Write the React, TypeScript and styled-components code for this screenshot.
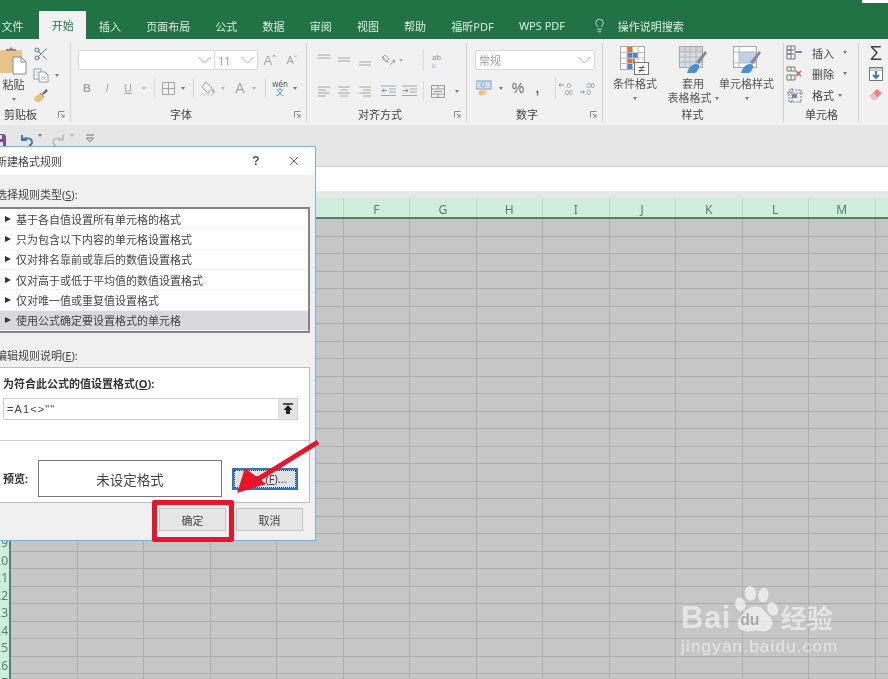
import * as React from 'react'
import styled, { createGlobalStyle } from 'styled-components'
import { Lightbulb, Scissors, X } from 'lucide-react'

const FONT = `"Noto Sans", "Noto Sans CJK SC", sans-serif`
const COL_WIDTH = 66.5
const ROW_HEIGHT = 17.5
const COLUMNS = ['A', 'B', 'C', 'D', 'E', 'F', 'G', 'H', 'I', 'J', 'K', 'L', 'M', 'N']
const ROWS = new Array(28).fill(0).map((_, index) => index + 1)
const TABS = ['文件', '开始', '插入', '页面布局', '公式', '数据', '审阅', '视图', '帮助', '福昕PDF', 'WPS PDF']
const RULE_TYPES = [
  '基于各自值设置所有单元格的格式',
  '只为包含以下内容的单元格设置格式',
  '仅对排名靠前或靠后的数值设置格式',
  '仅对高于或低于平均值的数值设置格式',
  '仅对唯一值或重复值设置格式',
  '使用公式确定要设置格式的单元格',
]

const GlobalStyle = createGlobalStyle`
  html, body {
    margin: 0;
    padding: 0;
    background: #fff;
  }
  body {
    font-family: ${FONT};
    font-size: 11px;
  }
`

const Page = styled.div`
  position: relative;
  width: 888px;
  height: 679px;
  overflow: hidden;
  display: flex;
  flex-direction: column;
  filter: blur(0.6px);
  background: #e6e6e6;
`

const TitleStrip = styled.div`
  height: 12px;
  flex: none;
  background: #217346;
  display: flex;
  justify-content: flex-end;
`

const WindowCorner = styled.div`
  width: 26px;
  height: 3px;
  background: #fff;
`

const TabRow = styled.div`
  height: 27px;
  flex: none;
  background: #217346;
  display: flex;
  align-items: stretch;
  margin-left: -11px;
`

const Tab = styled.div<{ $active?: boolean }>`
  padding: 0 12.6px;
  display: flex;
  align-items: center;
  font-size: 11px;
  white-space: nowrap;
  color: ${p => (p.$active ? '#217346' : '#dcebe2')};
  background: ${p => (p.$active ? '#f2f2f2' : 'transparent')};
  margin-top: ${p => (p.$active ? '-1px' : '0')};
  &:first-child {
    margin-right: 3px;
  }
`

const SearchHint = styled.div`
  display: flex;
  align-items: center;
  gap: 11px;
  margin-left: 14px;
  color: #dcebe2;
  font-size: 11px;
  svg {
    width: 15px;
    height: 15px;
  }
`

const Ribbon = styled.div`
  height: 86px;
  flex: none;
  background: #f1f1f1;
  display: flex;
  box-sizing: border-box;
  padding: 4px 0 3px;
`

const Group = styled.div<{ $w: number; $last?: boolean }>`
  width: ${p => p.$w}px;
  flex: none;
  box-sizing: border-box;
  display: flex;
  flex-direction: column;
  border-right: ${p => (p.$last ? 'none' : '1px solid #d2d2d2')};
`

const GroupBody = styled.div<{ $pad?: number }>`
  flex: 1;
  display: flex;
  min-height: 0;
  padding-left: ${p => p.$pad ?? 0}px;
`

const GroupLabel = styled.div<{ $pad?: number }>`
  height: 16px;
  display: grid;
  grid-template-columns: 1fr auto 1fr;
  align-items: center;
  font-size: 11px;
  color: #444;
  padding-right: 5px;
  span {
    grid-column: 2;
    transform: translateX(${p => p.$pad ?? 0}px);
  }
  svg {
    grid-column: 3;
    justify-self: end;
  }
`

const Stack = styled.div<{ $gap?: number; $top?: number }>`
  display: flex;
  flex-direction: column;
  gap: ${p => p.$gap ?? 0}px;
  padding-top: ${p => p.$top ?? 0}px;
`

const PasteColumn = styled(Stack)`
  width: 27px;
  align-items: center;
`

const PasteLabel = styled.div`
  height: 16px;
  margin-top: 2px;
  font-size: 11px;
  line-height: 16px;
  color: #444;
  white-space: nowrap;
`

const ToolRow = styled.div<{ $h?: number }>`
  display: flex;
  align-items: center;
  height: ${p => p.$h ?? 22}px;
`

const Slot = styled.div<{ $w: number; $h?: number; $c?: string; $size?: number; $bold?: boolean; $italic?: boolean; $under?: boolean }>`
  width: ${p => p.$w}px;
  height: ${p => (p.$h ? `${p.$h}px` : 'auto')};
  flex: none;
  display: flex;
  align-items: center;
  justify-content: center;
  color: ${p => p.$c ?? '#a6a6a6'};
  font-size: ${p => p.$size ?? 11}px;
  font-weight: ${p => (p.$bold ? 700 : 400)};
  font-style: ${p => (p.$italic ? 'italic' : 'normal')};
  text-decoration: ${p => (p.$under ? 'underline' : 'none')};
  font-family: "Liberation Sans", sans-serif;
`

const PhoneticGlyph = styled.div`
  width: 28px;
  flex: none;
  display: flex;
  flex-direction: column;
  align-items: center;
  font-size: 8px;
  line-height: 8px;
  color: #555;
  span:last-child {
    color: #3f8fbf;
  }
`

const Caret = styled.i<{ $c?: string }>`
  display: block;
  flex: none;
  width: 0;
  height: 0;
  border-left: 2.5px solid transparent;
  border-right: 2.5px solid transparent;
  border-top: 3px solid ${p => p.$c ?? '#777'};
`

const Divider = styled.div`
  width: 1px;
  height: 20px;
  flex: none;
  background: #dadada;
`

const Combo = styled.div<{ $w: number; $overlap?: boolean }>`
  width: ${p => p.$w}px;
  height: 20px;
  flex: none;
  box-sizing: border-box;
  background: #fff;
  border: 1px solid #d9d9d9;
  margin-left: ${p => (p.$overlap ? '-1px' : '0')};
  display: flex;
  align-items: center;
  justify-content: space-between;
  padding: 0 3px;
  font-size: 11px;
  color: #a0a0a0;
`

const BigButton = styled.div<{ $w: number; $pull?: number }>`
  width: ${p => p.$w}px;
  margin-left: ${p => p.$pull ?? 0}px;
  flex: none;
  display: flex;
  flex-direction: column;
  align-items: center;
  font-size: 11px;
  line-height: 14px;
  color: #555;
  white-space: nowrap;
  svg {
    margin-bottom: 2px;
  }
`

const CaretLine = styled.div`
  display: flex;
  align-items: center;
  gap: 3px;
`

const CaretBelow = styled.div`
  height: 14px;
  display: flex;
  align-items: center;
`

const CellActions = styled.div`
  display: flex;
  flex-direction: column;
  margin-top: -1px;
`

const CellAction = styled.div`
  display: flex;
  align-items: center;
  height: 21.5px;
  font-size: 11px;
  color: #444;
`

const QuickBar = styled.div`
  height: 32px;
  flex: none;
  background: #e6e6e6;
  border-bottom: 1px solid #d0d0d0;
  display: flex;
  align-items: flex-start;
  padding-top: 9px;
  margin-left: -8px;
`

const FormulaBar = styled.div`
  height: 24px;
  flex: none;
  background: #fff;
`

const FormulaGap = styled.div`
  height: 7px;
  flex: none;
  background: #e8e8e8;
`

const Sheet = styled.div`
  flex: 1;
  min-height: 0;
  overflow: hidden;
`

const HeaderRow = styled.div`
  display: flex;
  height: 21px;
  box-sizing: border-box;
  background: #d0eede;
  border-bottom: 2px solid #4f8368;
`

const Corner = styled.div`
  width: 11px;
  flex: none;
`

const ColHead = styled.div`
  width: ${COL_WIDTH}px;
  flex: none;
  box-sizing: border-box;
  border-right: 1px solid #bcd9c9;
  display: flex;
  align-items: flex-end;
  justify-content: center;
  font-size: 12px;
  line-height: 15px;
  color: #58806a;
`

const SheetRow = styled.div`
  display: flex;
  height: ${ROW_HEIGHT}px;
`

const RowHead = styled.div`
  width: 11px;
  flex: none;
  box-sizing: border-box;
  background: #d0eede;
  border-right: 2px solid #4f8368;
  display: flex;
  justify-content: flex-end;
  align-items: center;
  overflow: hidden;
  font-size: 12px;
  color: #58806a;
  padding-right: 1px;
`

const Cell = styled.div`
  width: ${COL_WIDTH}px;
  flex: none;
  box-sizing: border-box;
  background: #c6c6c6;
  border-right: 1px solid #adadad;
  border-bottom: 1px solid #adadad;
`

const Dialog = styled.div`
  position: absolute;
  left: -12px;
  top: 146px;
  width: 328px;
  height: 395px;
  box-sizing: border-box;
  background: #f0f0f0;
  border: 1px solid #7fb0d8;
  display: flex;
  flex-direction: column;
  color: #333;
`

const DialogTitle = styled.div`
  height: 28px;
  flex: none;
  background: #fff;
  display: flex;
  align-items: center;
  padding-left: 7px;
  font-size: 11px;
  color: #444;
`

const TitleText = styled.div`
  flex: 1;
`

const HelpMark = styled.div`
  width: 20px;
  margin-right: 21px;
  text-align: center;
  font: 700 12px "Liberation Sans", sans-serif;
  color: #555;
`

const CloseMark = styled.div`
  width: 14px;
  margin-right: 14px;
  display: flex;
  color: #333;
`

const DialogBody = styled.div`
  flex: 1;
  display: flex;
  flex-direction: column;
  padding: 0 5px 0 7px;
`

const FieldLabel = styled.div<{ $top: number }>`
  height: 16px;
  line-height: 16px;
  margin-top: ${p => p.$top}px;
  font-size: 11px;
  color: #444;
  u {
    text-underline-offset: 1px;
  }
`

const RuleList = styled.div`
  margin-top: 4px;
  height: 126px;
  box-sizing: border-box;
  border: 2px solid #858585;
  background: #fff;
`

const RuleRow = styled.div<{ $selected?: boolean }>`
  height: 20.33px;
  display: flex;
  align-items: center;
  gap: 5px;
  padding-left: 7px;
  font-size: 11px;
  color: #444;
  background: ${p => (p.$selected ? '#d9d9dc' : '#fff')};
  border-bottom: 1px solid #f4f4f4;
  box-sizing: border-box;
`

const Triangle = styled.i`
  display: block;
  width: 0;
  height: 0;
  border-top: 3.5px solid transparent;
  border-bottom: 3.5px solid transparent;
  border-left: 6px solid #333;
`

const DescriptionBox = styled.div`
  margin-top: 3px;
  height: 136px;
  box-sizing: border-box;
  background: #fff;
  border: 1px solid #bdbdbd;
  padding: 8px 11px 0 6px;
  display: flex;
  flex-direction: column;
`

const BoldLabel = styled.div`
  height: 16px;
  line-height: 16px;
  font-size: 11px;
  font-weight: 700;
  color: #333;
  flex: none;
`

const FormulaInput = styled.div`
  margin-top: 6px;
  height: 22px;
  flex: none;
  box-sizing: border-box;
  border: 1px solid #cfcfcf;
  display: flex;
  align-items: center;
  justify-content: space-between;
  padding-left: 3px;
  font: 11px "Liberation Sans", sans-serif;
  letter-spacing: 1.1px;
  color: #444;
`

const RefButton = styled.div`
  width: 19px;
  height: 20px;
  background: #e4e4e4;
  display: flex;
  align-items: center;
  justify-content: center;
`

const Rule = styled.div`
  margin: 20px -11px 0 -6px;
  height: 1px;
  flex: none;
  background: #d0d0d0;
`

const PreviewRow = styled.div`
  margin-top: 19px;
  display: flex;
  align-items: center;
`

const PreviewBox = styled.div`
  margin-left: 10px;
  width: 184px;
  height: 37px;
  box-sizing: border-box;
  border: 1px solid #787878;
  display: flex;
  align-items: center;
  justify-content: center;
  font-size: 13.5px;
  color: #444;
  background: #fff;
`

const FormatButton = styled.div`
  margin-left: 10px;
  width: 66px;
  height: 22px;
  box-sizing: border-box;
  border: 2px solid #2a78c4;
  outline: 1px dotted #333;
  outline-offset: -3px;
  background: #e1e1e1;
  display: flex;
  align-items: center;
  justify-content: center;
  font-size: 11px;
  color: #444;
`

const Footer = styled.div`
  margin-top: 5px;
  display: flex;
  justify-content: flex-end;
  gap: 10px;
  padding-right: 7px;
`

const DialogButton = styled.div`
  width: 67px;
  height: 23px;
  box-sizing: border-box;
  background: #e6e6e6;
  border: 1px solid #c4c4c4;
  display: flex;
  align-items: center;
  justify-content: center;
  font-size: 11px;
  color: #444;
`

const Highlight = styled.div`
  position: absolute;
  left: 152px;
  top: 500px;
  width: 82px;
  height: 42px;
  box-sizing: border-box;
  border: 5px solid #e8142a;
  border-radius: 2px;
`

const ArrowMark = styled.svg`
  position: absolute;
  left: 230px;
  top: 435px;
`

const Watermark = styled.div`
  position: absolute;
  left: 681px;
  top: 583px;
  width: 165px;
  color: rgba(255, 255, 255, 0.55);
`

const BrandLine = styled.div`
  display: flex;
  align-items: flex-end;
  height: 53px;
`

const BrandLatin = styled.div`
  font: 700 31px/36px "Liberation Sans", sans-serif;
  letter-spacing: 0.5px;
`

const BrandCn = styled.div`
  font-size: 26px;
  line-height: 34px;
  font-weight: 700;
  margin-bottom: 1px;
  white-space: nowrap;
`

const BrandUrl = styled.div`
  font: 17px/22px "Liberation Sans", sans-serif;
  letter-spacing: 1.2px;
  white-space: nowrap;
`

const Launcher: React.FunctionComponent = () => (
  <svg width="7" height="7" viewBox="0 0 7 7" fill="none" stroke="#8a8a8a" strokeWidth="1">
    <path d="M0.5 6.5V0.5H6.5M3 3l3 3M6 3.5V6H3.5" />
  </svg>
)

const Chevron: React.FunctionComponent = () => (
  <svg width="13" height="8" viewBox="0 0 13 8" fill="none" stroke="#a8a8a8" strokeWidth="1">
    <path d="M0.5 1l6 6 6-6" />
  </svg>
)

const PasteIcon = () => (
  <svg width="28" height="29" viewBox="0 0 28 29">
    <rect x="0" y="4" width="22" height="23" rx="1" fill="#e9c48a" />
    <path d="M6 5V3h3l2-2 2 2h3v2z" fill="#8a8a8a" />
    <path d="M13 11h8l5 5v12H13z" fill="#fff" stroke="#8e8e8e" />
    <path d="M21 11v5h5" fill="none" stroke="#8e8e8e" />
  </svg>
)

const CopyIcon = () => (
  <svg width="16" height="15" viewBox="0 0 16 15" fill="#fff" stroke="#8b9aa8">
    <path d="M1 1h7v10H1z" />
    <path d="M6 4h6l3 3v7H6z" />
    <path d="M3 4h3M3 7h2M8 9h5M8 11h5" stroke="#a9b4bd" />
  </svg>
)

const BrushIcon = () => (
  <svg width="16" height="15" viewBox="0 0 16 15">
    <path d="M9 6l4-5 2 2-5 4z" fill="#666" />
    <path d="M2 9l5-4 4 4-4 5H4l-3-2z" fill="#e8c27a" />
    <path d="M7 5l4 4" stroke="#a98c50" />
  </svg>
)

const LinesIcon: React.FunctionComponent<{ rows: number[][] }> = ({ rows }) => (
  <svg width="14" height="14" viewBox="0 0 14 14" stroke="#a6a6a6" strokeWidth="1" fill="none">
    {rows.map(([x1, x2, y], index) => (
      <path key={index} d={`M${x1} ${y}H${x2}`} />
    ))}
  </svg>
)

const OrientIcon = () => (
  <svg width="15" height="13" viewBox="0 0 15 13" fill="none" stroke="#a6a6a6">
    <path d="M2 3l6 6M4 1l4 4-3 3-4-4zM9 11l5-5M11 7l3-1-1 3" />
  </svg>
)

const IndentIcon: React.FunctionComponent<{ flip?: boolean }> = ({ flip }) => (
  <svg width="15" height="12" viewBox="0 0 15 12" fill="none" stroke="#a6a6a6">
    <path d="M0 1h15M8 4h7M8 7h7M0 10.5h15" />
    <path d={flip ? 'M1 5.5h5M4 3.5l2 2-2 2' : 'M1 5.5h5M3 3.5l-2 2 2 2'} stroke="#6f97bf" />
  </svg>
)

const BorderIcon = () => (
  <svg width="13" height="13" viewBox="0 0 13 13" fill="none" stroke="#a6a6a6">
    <path d="M0.5 0.5h12v12h-12zM6.5 0.5v12M0.5 6.5h12" />
  </svg>
)

const FillIcon = () => (
  <svg width="16" height="15" viewBox="0 0 16 15" fill="none" stroke="#a8a8a8">
    <path d="M6 1l6 6-4 5-6-6z" />
    <path d="M13 8c1 2 2 3 1 4s-2-1-1-4z" fill="#c9c9c9" />
    <rect x="0" y="12" width="14" height="3" fill="#e2e2e2" stroke="none" />
  </svg>
)

const WrapIcon = () => (
  <svg width="14" height="17" viewBox="0 0 14 17">
    <text x="1" y="8" fontSize="8" fontFamily="Liberation Sans" fill="#8f8f8f">ab</text>
    <text x="1" y="16" fontSize="8" fontFamily="Liberation Sans" fill="#9fb6cc">c</text>
  </svg>
)

const MergeIcon = () => (
  <svg width="14" height="13" viewBox="0 0 14 13" fill="none" stroke="#9a9a9a">
    <path d="M0.5 0.5h13v12H0.5zM0.5 4h13M0.5 9h13M7 0.5V4M7 9v3.5" />
    <path d="M3 6.5h8" stroke="#6f97bf" />
  </svg>
)

const CurrencyIcon = () => (
  <svg width="16" height="16" viewBox="0 0 16 16">
    <rect x="0" y="1" width="15" height="8" fill="#cfdfee" stroke="#7ea1c4" />
    <circle cx="7" cy="5" r="2" fill="#fff" stroke="#7ea1c4" />
    <circle cx="8" cy="12" r="3" fill="#f0cf95" />
    <circle cx="5" cy="13" r="2.5" fill="#eac07c" />
  </svg>
)

const DecimalIcon: React.FunctionComponent<{ more?: boolean }> = ({ more }) => (
  <svg width="17" height="15" viewBox="0 0 17 15">
    <text x={more ? 5 : 7} y="6.5" fontSize="7" fontFamily="Liberation Sans" fill="#8c8c8c">{more ? '.00' : '.0'}</text>
    <text x="5" y="13.5" fontSize="7" fontFamily="Liberation Sans" fill="#8c8c8c">{more ? '.0' : '.00'}</text>
    <path d={more ? 'M0 11h4M3 9.5l1.5 1.5-1.5 1.5' : 'M1 4h5M2.5 2.5L1 4l1.5 1.5'} stroke="#6f97bf" fill="none" />
  </svg>
)

const ConditionalIcon = () => (
  <svg width="30" height="29" viewBox="0 0 30 29">
    <rect x="0.5" y="0.5" width="24" height="23" fill="#fff" stroke="#a8a8a8" />
    <rect x="7" y="1" width="5" height="5" fill="#e2703a" />
    <rect x="7" y="7" width="11" height="5" fill="#4a86c5" />
    <rect x="7" y="12.5" width="8" height="5" fill="#e2703a" />
    <rect x="7" y="18" width="5" height="5" fill="#4a86c5" />
    <path d="M7 1v22M12.5 1v22M18 1v22M1 6.5h23M1 12h23M1 17.5h23" stroke="#c0c0c0" fill="none" />
    <rect x="14.5" y="16.5" width="14" height="12" fill="#fff" stroke="#777" />
    <path d="M18.5 21.5h6M18.5 24.5h6M23.5 19.5l-4 7" stroke="#555" fill="none" />
  </svg>
)

const TableStyleIcon: React.FunctionComponent<{ cell?: boolean }> = ({ cell }) => (
  <svg width="30" height="29" viewBox="0 0 30 29">
    <rect x="1.5" y="0.5" width="23" height="21" fill="#fff" stroke="#a8a8a8" />
    <rect x="2" y="1" width="22" height="5" fill={cell ? '#fff' : '#d2d2d2'} />
    <rect x={cell ? 7 : 2} y="6" width={cell ? 17 : 22} height={cell ? 11 : 15} fill={cell ? '#bdd2e8' : '#d5dfe9'} />
    <path d={cell ? 'M7 1v20M19 17v4M2 6h22M2 17h22' : 'M7 1v20M12 1v20M18 1v20M2 6h22M2 11h22M2 16h22'} stroke="#b8b8b8" fill="none" />
    <path d="M18 16L27 5l2 2-8 11z" fill="#8a8a8a" />
    <path d="M9 27c2-7 7-11 12-8 1 2-1 6-4 8z" fill="#4a90d0" />
  </svg>
)

const InsertIcon = () => (
  <svg width="17" height="15" viewBox="0 0 17 15" fill="none" stroke="#777">
    <path d="M1 1h8v4H1zM1 5h4v4H1zM1 9h8v5H1zM5 1v4M5 9v5" />
    <path d="M9 7h7" stroke="#5a8fc7" strokeWidth="2" />
  </svg>
)

const DeleteIcon = () => (
  <svg width="17" height="15" viewBox="0 0 17 15" fill="none" stroke="#777">
    <path d="M1 1h8v4H1zM1 9h8v5H1zM5 1v4M5 9v5" />
    <path d="M10 5l5 5M15 5l-5 5" stroke="#dc5a4a" strokeWidth="1.6" />
  </svg>
)

const FormatIcon = () => (
  <svg width="16" height="15" viewBox="0 0 16 15" fill="none" stroke="#777">
    <path d="M2 2h12v12H2zM0 5h16M5 0v15" strokeDasharray="2 1" />
    <rect x="5" y="6" width="5" height="4" fill="#5a8fc7" stroke="none" />
  </svg>
)

const FillDownIcon = () => (
  <svg width="14" height="14" viewBox="0 0 14 14">
    <rect x="0.5" y="0.5" width="13" height="13" fill="#fff" stroke="#777" />
    <rect x="1" y="1" width="12" height="3" fill="#cfcfcf" />
    <path d="M7 4v7M4 8l3 3 3-3" stroke="#2f78c4" strokeWidth="1.8" fill="none" />
  </svg>
)

const EraserIcon = () => (
  <svg width="14" height="13" viewBox="0 0 14 13">
    <path d="M1 8l7-7 5 4-7 7H4z" fill="#ee7f8c" />
    <path d="M1 8l3 4h2L8 9 5 5z" fill="#f5c1c7" />
  </svg>
)

const SaveIcon = () => (
  <svg width="13" height="13" viewBox="0 0 13 13">
    <path d="M0 0h11l2 2v11H0z" fill="#7c4a9e" />
    <rect x="3" y="1" width="6" height="4" fill="#e6e6e6" />
    <rect x="3" y="8" width="7" height="5" fill="#e6e6e6" />
  </svg>
)

const UndoIcon = styled.svg<{ $flip?: boolean }>`
  transform: ${p => (p.$flip ? 'scaleX(-1)' : 'none')};
`

const UndoGlyph: React.FunctionComponent<{ color: string; flip?: boolean }> = ({ color, flip }) => (
  <UndoIcon $flip={flip} width="14" height="13" viewBox="0 0 14 13" fill="none" stroke={color} strokeWidth="2">
    <path d="M2 1v5h5M2 6c3-3 10-2 10 2 0 2-1 3-3 4" />
  </UndoIcon>
)

const CustomizeIcon = () => (
  <svg width="8" height="9" viewBox="0 0 8 9">
    <path d="M0 1h8" stroke="#777" />
    <path d="M0.5 4h7L4 8z" fill="none" stroke="#777" />
  </svg>
)

const RefArrow = () => (
  <svg width="10" height="12" viewBox="0 0 10 12">
    <path d="M0 1h10" stroke="#222" strokeWidth="1.5" />
    <path d="M5 2L9.5 7H7v4H3V7H0.5z" fill="#222" />
  </svg>
)

const PawIcon = () => (
  <svg width="50" height="53" viewBox="0 0 54 53" fill="rgba(255,255,255,0.62)">
    <ellipse cx="10" cy="21" rx="5.5" ry="7.5" transform="rotate(-10 10 21)" />
    <ellipse cx="21" cy="9" rx="6" ry="8" transform="rotate(-10 21 9)" />
    <ellipse cx="35" cy="11" rx="5.5" ry="8" transform="rotate(8 35 11)" />
    <ellipse cx="45" cy="26" rx="5.5" ry="7.5" transform="rotate(-25 45 26)" />
    <path d="M27 23c8 0 9 7 15 11 6 6 2 17-8 16-4 0-5-1-8-1s-5 2-10 1C8 50 5 42 9 36c5-5 8-13 18-13z" />
    <text x="10" y="43" fontSize="17" fontWeight="700" fontFamily="Liberation Sans" fill="#a9a9a9">du</text>
  </svg>
)

const Toolbar: React.FunctionComponent = () => (
  <Ribbon>
    <Group $w={71}>
      <GroupBody>
        <PasteColumn $top={3}>
          <PasteIcon />
          <PasteLabel>粘贴</PasteLabel>
          <Slot $w={27} $h={12}><Caret /></Slot>
        </PasteColumn>
        <Stack $top={1}>
          <ToolRow $h={21}><Slot $w={28}><Scissors size={16} color="#5c7186" strokeWidth={1.4} /></Slot></ToolRow>
          <ToolRow $h={21}><Slot $w={28}><CopyIcon /></Slot><Caret /></ToolRow>
          <ToolRow $h={21}><Slot $w={28}><BrushIcon /></Slot></ToolRow>
        </Stack>
      </GroupBody>
      <GroupLabel $pad={-12}><span>剪贴板</span><Launcher /></GroupLabel>
    </Group>
    <Group $w={236}>
      <GroupBody $pad={7}>
        <Stack $gap={7} $top={7}>
          <ToolRow $h={20}>
            <Combo $w={137}><span /><Chevron /></Combo>
            <Combo $w={44} $overlap><span>11</span><Chevron /></Combo>
            <Slot $w={24} $size={13}>Aˆ</Slot>
            <Slot $w={20} $size={11}>Aˇ</Slot>
          </ToolRow>
          <ToolRow $h={22}>
            <Slot $w={18} $bold>B</Slot>
            <Slot $w={22} $italic>I</Slot>
            <Slot $w={20} $under>U</Slot>
            <Slot $w={12}><Caret $c="#b5b5b5" /></Slot>
            <Slot $w={4} />
            <Divider />
            <Slot $w={26}><BorderIcon /></Slot>
            <Slot $w={4}><Caret /></Slot>
            <Slot $w={8} />
            <Divider />
            <Slot $w={28}><FillIcon /></Slot>
            <Slot $w={2}><Caret $c="#b5b5b5" /></Slot>
            <Slot $w={4} />
            <Slot $w={24} $size={14}>A</Slot>
            <Slot $w={4}><Caret $c="#b5b5b5" /></Slot>
            <Slot $w={9} />
            <Divider />
            <PhoneticGlyph><span>wén</span><span>文</span></PhoneticGlyph>
            <Slot $w={2}><Caret /></Slot>
          </ToolRow>
        </Stack>
      </GroupBody>
      <GroupLabel $pad={-5}><span>字体</span><Launcher /></GroupLabel>
    </Group>
    <Group $w={160}>
      <GroupBody $pad={10}>
        <Stack $gap={11} $top={7}>
          <ToolRow $h={20}>
            <Slot $w={14}><LinesIcon rows={[[1, 13, 2], [1, 13, 5]]} /></Slot>
            <Slot $w={6} />
            <Slot $w={14}><LinesIcon rows={[[1, 13, 5], [1, 13, 8]]} /></Slot>
            <Slot $w={7} />
            <Slot $w={14}><LinesIcon rows={[[1, 13, 9], [1, 13, 12]]} /></Slot>
            <Slot $w={9} />
            <Slot $w={15}><OrientIcon /></Slot>
            <Slot $w={9}><Caret $c="#b5b5b5" /></Slot>
            <Slot $w={18} />
            <Divider />
            <Slot $w={27}><WrapIcon /></Slot>
          </ToolRow>
          <ToolRow $h={20}>
            <Slot $w={14}><LinesIcon rows={[[1, 13, 3], [1, 9, 6], [1, 13, 9], [1, 9, 12]]} /></Slot>
            <Slot $w={6} />
            <Slot $w={14}><LinesIcon rows={[[1, 13, 3], [3, 11, 6], [1, 13, 9], [3, 11, 12]]} /></Slot>
            <Slot $w={7} />
            <Slot $w={14}><LinesIcon rows={[[1, 13, 3], [5, 13, 6], [1, 13, 9], [5, 13, 12]]} /></Slot>
            <Slot $w={9} />
            <Slot $w={15}><IndentIcon /></Slot>
            <Slot $w={6} />
            <Slot $w={15}><IndentIcon flip /></Slot>
            <Slot $w={6} />
            <Divider />
            <Slot $w={27}><MergeIcon /></Slot>
            <Slot $w={4} />
            <Caret />
          </ToolRow>
        </Stack>
      </GroupBody>
      <GroupLabel $pad={-4}><span>对齐方式</span><Launcher /></GroupLabel>
    </Group>
    <Group $w={136}>
      <GroupBody $pad={8}>
        <Stack $gap={7} $top={7}>
          <ToolRow $h={20}>
            <Combo $w={120}><span>常规</span><Chevron /></Combo>
          </ToolRow>
          <ToolRow $h={22}>
            <Slot $w={18}><CurrencyIcon /></Slot>
            <Slot $w={15}><Caret /></Slot>
            <Slot $w={20} $c="#666" $size={14}>%</Slot>
            <Slot $w={19} $c="#666" $size={14} $bold>,</Slot>
            <Slot $w={8} />
            <Divider />
            <Slot $w={20}><DecimalIcon /></Slot>
            <Slot $w={24}><DecimalIcon more /></Slot>
          </ToolRow>
        </Stack>
      </GroupBody>
      <GroupLabel $pad={-5}><span>数字</span><Launcher /></GroupLabel>
    </Group>
    <Group $w={181}>
      <GroupBody $pad={9}>
        <Stack $top={3}>
          <BigButton $w={46}>
            <ConditionalIcon />
            <span>条件格式</span>
            <CaretBelow><Caret /></CaretBelow>
          </BigButton>
        </Stack>
        <Stack $top={3}>
          <BigButton $w={70}>
            <TableStyleIcon />
            <span>套用</span>
            <CaretLine><span>表格格式</span><Caret /></CaretLine>
          </BigButton>
        </Stack>
        <Stack $top={3}>
          <BigButton $w={55} $pull={-9}>
            <TableStyleIcon cell />
            <span>单元格样式</span>
            <CaretBelow><Caret /></CaretBelow>
          </BigButton>
        </Stack>
      </GroupBody>
      <GroupLabel $pad={2}><span>样式</span></GroupLabel>
    </Group>
    <Group $w={75}>
      <GroupBody $pad={2}>
        <CellActions>
          <CellAction><Slot $w={17}><InsertIcon /></Slot><Slot $w={9} /><span>插入</span><Slot $w={22}><Caret /></Slot></CellAction>
          <CellAction><Slot $w={17}><DeleteIcon /></Slot><Slot $w={9} /><span>删除</span><Slot $w={22}><Caret /></Slot></CellAction>
          <CellAction><Slot $w={17}><FormatIcon /></Slot><Slot $w={9} /><span>格式</span><Slot $w={12}><Caret /></Slot></CellAction>
        </CellActions>
      </GroupBody>
      <GroupLabel $pad={3}><span>单元格</span></GroupLabel>
    </Group>
    <Group $w={29} $last>
      <GroupBody $pad={9}>
        <Stack>
          <Slot $w={16} $h={21} $c="#444" $size={20}>Σ</Slot>
          <Slot $w={16} $h={20}><FillDownIcon /></Slot>
          <Slot $w={16} $h={20}><EraserIcon /></Slot>
        </Stack>
      </GroupBody>
    </Group>
  </Ribbon>
)

const Grid: React.FunctionComponent = () => (
  <Sheet>
    <HeaderRow>
      <Corner />
      {COLUMNS.map(col => <ColHead key={col}>{col}</ColHead>)}
    </HeaderRow>
    {ROWS.map(row => (
      <SheetRow key={row}>
        <RowHead>{row}</RowHead>
        {COLUMNS.map(col => <Cell key={col} />)}
      </SheetRow>
    ))}
  </Sheet>
)

const RuleDialog: React.FunctionComponent = () => (
  <Dialog>
    <DialogTitle>
      <TitleText>新建格式规则</TitleText>
      <HelpMark>?</HelpMark>
      <CloseMark><X size={14} strokeWidth={1.3} /></CloseMark>
    </DialogTitle>
    <DialogBody>
      <FieldLabel $top={12}>选择规则类型(<u>S</u>):</FieldLabel>
      <RuleList>
        {RULE_TYPES.map((rule, index) => (
          <RuleRow key={rule} $selected={index === RULE_TYPES.length - 1}>
            <Triangle />
            {rule}
          </RuleRow>
        ))}
      </RuleList>
      <FieldLabel $top={15}>编辑规则说明(<u>E</u>):</FieldLabel>
      <DescriptionBox>
        <BoldLabel>为符合此公式的值设置格式(<u>O</u>):</BoldLabel>
        <FormulaInput>
          <span>=A1&lt;&gt;""</span>
          <RefButton><RefArrow /></RefButton>
        </FormulaInput>
        <Rule />
        <PreviewRow>
          <BoldLabel>预览:</BoldLabel>
          <PreviewBox>未设定格式</PreviewBox>
          <FormatButton>格式(<u>F</u>)...</FormatButton>
        </PreviewRow>
      </DescriptionBox>
      <Footer>
        <DialogButton>确定</DialogButton>
        <DialogButton>取消</DialogButton>
      </Footer>
    </DialogBody>
  </Dialog>
)

export default function App() {
  return (
    <>
      <GlobalStyle />
      <Page>
        <TitleStrip><WindowCorner /></TitleStrip>
        <TabRow>
          {TABS.map(tab => <Tab key={tab} $active={tab === '开始'}>{tab}</Tab>)}
          <SearchHint><Lightbulb strokeWidth={1.4} />操作说明搜索</SearchHint>
        </TabRow>
        <Toolbar />
        <QuickBar>
          <Slot $w={14}><SaveIcon /></Slot>
          <Slot $w={14} />
          <Slot $w={14}><UndoGlyph color="#3d78b8" /></Slot>
          <Slot $w={12}><Caret /></Slot>
          <Slot $w={5} />
          <Slot $w={14}><UndoGlyph color="#c2c2c2" flip /></Slot>
          <Slot $w={14}><Caret $c="#bbb" /></Slot>
          <Slot $w={4} />
          <Slot $w={14}><CustomizeIcon /></Slot>
        </QuickBar>
        <FormulaBar />
        <FormulaGap />
        <Grid />
        <RuleDialog />
        <Highlight />
        <ArrowMark width="92" height="62" viewBox="0 0 92 62">
          <path d="M88 7L22 48" stroke="#e8142a" strokeWidth="5" />
          <path d="M7 58L15 33l21 16z" fill="#e8142a" />
        </ArrowMark>
        <Watermark>
          <BrandLine>
            <BrandLatin>Bai</BrandLatin>
            <PawIcon />
            <BrandCn>经验</BrandCn>
          </BrandLine>
          <BrandUrl>jingyan.baidu.com</BrandUrl>
        </Watermark>
      </Page>
    </>
  )
}
